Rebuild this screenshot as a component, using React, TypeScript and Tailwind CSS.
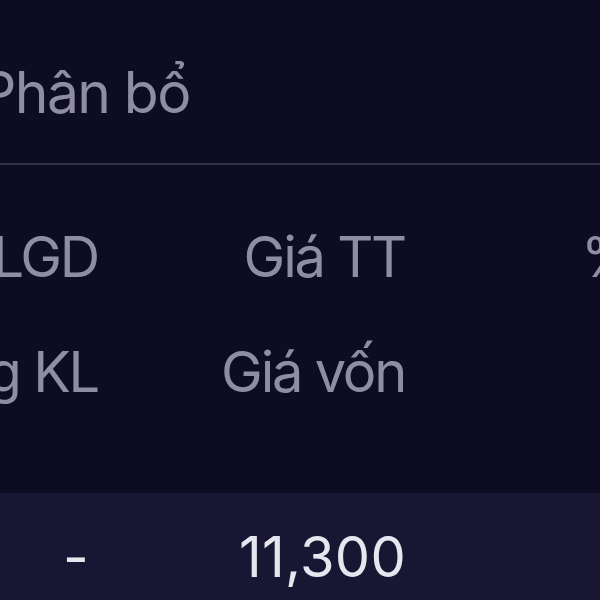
export default function App() {
  return (
    <div className="w-[600px] h-[600px] overflow-hidden bg-[#0e0c23] font-['Inter','Liberation_Sans',sans-serif]">
      {/* Title */}
      <div className="h-[163px] pt-[64px]">
        <div className="-ml-[20px] text-[57px] leading-none tracking-[-0.028em] text-[#8f8da3] whitespace-nowrap">Phân bổ</div>
      </div>
      <div className="h-[2px] bg-[#34324a]" />

      {/* Column headers */}
      <div className="h-[328px] pt-[64px] text-[56px] leading-none tracking-[-0.04em] text-[#8f8da3] whitespace-nowrap">
        <div className="grid grid-cols-[98px_307px_1fr]">
          <div className="flex justify-end">KLGD</div>
          <div className="flex justify-end">Giá TT</div>
          <div className="pl-[176px]">%Lãi/lỗ</div>
        </div>
        <div className="grid grid-cols-[98px_307px_1fr] mt-[59px]">
          <div className="flex justify-end">Tổng KL</div>
          <div className="flex justify-end">Giá vốn</div>
          <div />
        </div>
      </div>

      {/* Row */}
      <div className="h-[107px] bg-[#181632] pt-[36px] text-[56px] leading-none tracking-[0.005em] text-[#e6e6ef] whitespace-nowrap">
        <div className="grid grid-cols-[89px_317px_1fr]">
          <div className="flex justify-end">-</div>
          <div className="flex justify-end">11,300</div>
          <div />
        </div>
      </div>
    </div>
  )
}
